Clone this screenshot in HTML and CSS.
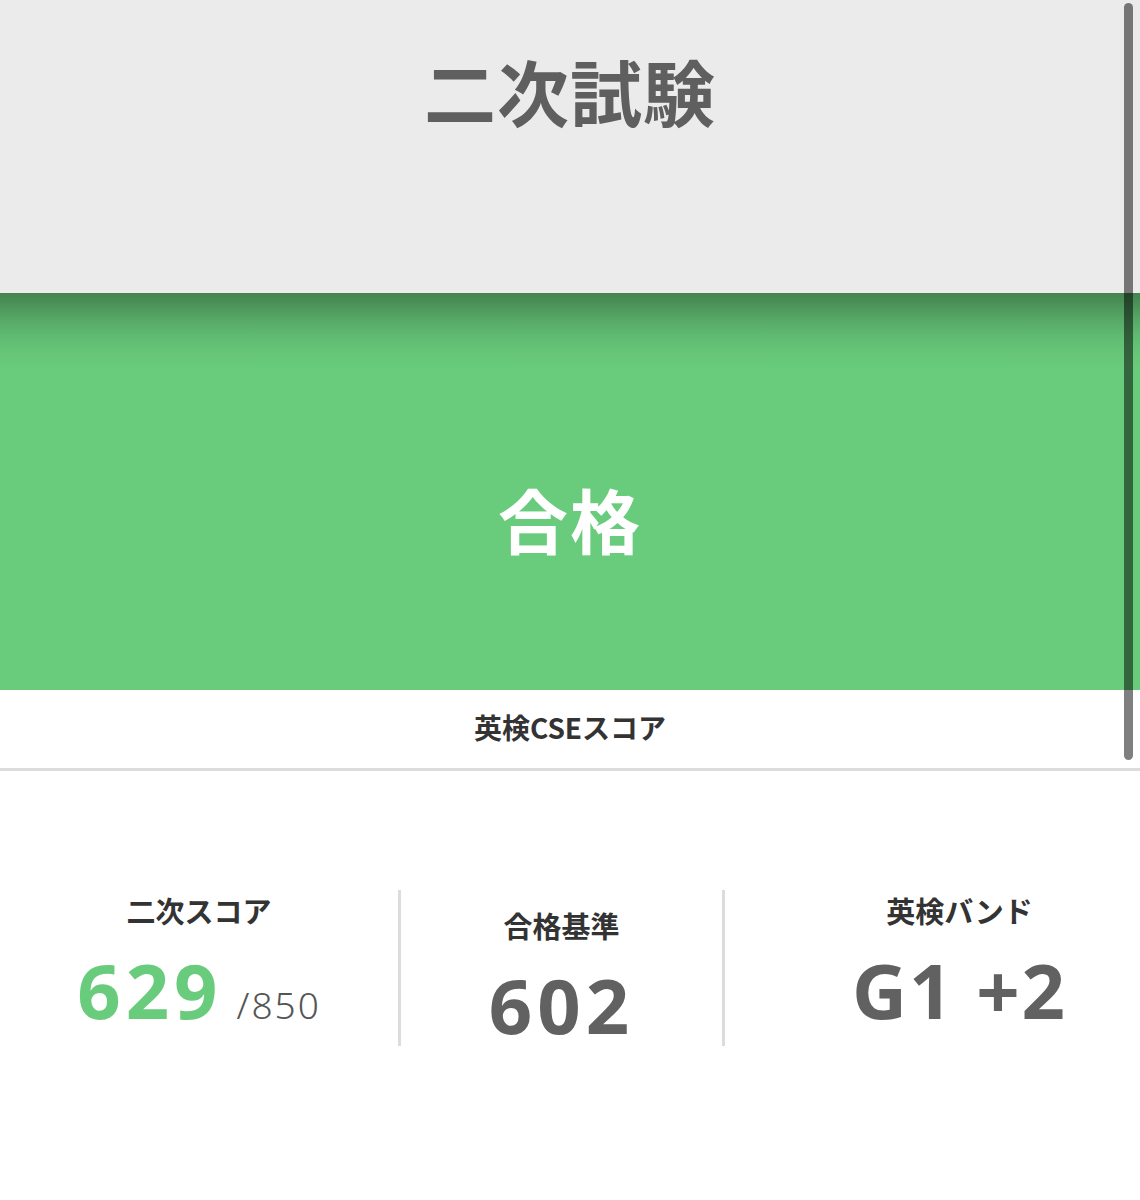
FILE: index.html
```html
<!DOCTYPE html>
<html lang="ja">
<head>
  <meta charset="UTF-8" />
  <meta name="viewport" content="width=device-width, initial-scale=1.0" />
  <title>二次試験</title>
  <link rel="stylesheet" href="styles.css">
</head>
<body>
  <div class="page">
    <header class="header">
      <h1>二次試験</h1>
    </header>

    <section class="result">
      <p class="result-text">合格</p>
    </section>

    <div class="section-title">英検CSEスコア</div>

    <section class="stats">
      <div class="stat">
        <div class="stat-label">二次スコア</div>
        <div class="stat-value">
          <span class="score">629</span>
          <span class="max">/850</span>
        </div>
      </div>
      <div class="stat stat-mid">
        <div class="stat-label">合格基準</div>
        <div class="stat-value">602</div>
      </div>
      <div class="stat stat-band">
        <div class="stat-label">英検バンド</div>
        <div class="stat-value band-value">G1 +2</div>
      </div>
    </section>

    <div class="scrollbar"></div>
  </div>
</body>
</html>
```

FILE: styles.css
```css
:root {
  --gray-bg: #ebebeb;
  --title-color: #5f5f5f;
  --green: #69cc7c;
  --text-dark: #333;
  --num-color: #616161;
  --line-color: #dcdcdc;
}

body {
  margin: 0;
  background: #fff;
  font-family: "Noto Sans CJK JP", "Noto Sans", sans-serif;
}

.page {
  position: relative;
  min-height: 1200px;
}

.header {
  height: 293px;
  background: var(--gray-bg);
  display: flex;
  justify-content: center;
  align-items: flex-start;
}

.header h1 {
  margin: 54px 0 0;
  font-size: 72px;
  line-height: 1;
  font-weight: 700;
  letter-spacing: 1px;
  color: var(--title-color);
}

.result {
  height: 397px;
  box-sizing: border-box;
  padding-top: 55px;
  background:
    linear-gradient(to bottom,
      rgba(0, 0, 0, 0.36) 0,
      rgba(0, 0, 0, 0.28) 12px,
      rgba(0, 0, 0, 0.18) 26px,
      rgba(0, 0, 0, 0.09) 42px,
      rgba(0, 0, 0, 0.03) 60px,
      rgba(0, 0, 0, 0) 80px),
    var(--green);
  display: flex;
  justify-content: center;
  align-items: center;
}

.result-text {
  margin: 0;
  font-size: 70px;
  line-height: 1;
  font-weight: 700;
  color: #fff;
  letter-spacing: 2px;
}

.section-title {
  height: 81px;
  box-sizing: border-box;
  padding-bottom: 5px;
  display: flex;
  justify-content: center;
  align-items: center;
  border-bottom: 3px solid var(--line-color);
  font-size: 28px;
  font-weight: 700;
  color: var(--text-dark);
}

.stats {
  display: grid;
  grid-template-columns: 398px 324px 1fr;
  padding-top: 119px;
}

.stat {
  height: 156px;
  box-sizing: border-box;
  display: flex;
  flex-direction: column;
  align-items: center;
  padding-top: 0;
}

.stat-mid,
.stat-band {
  border-left: 3px solid var(--line-color);
}

.stat-mid {
  padding-top: 15px;
}

.stat-band {
  padding-left: 54px;
}

.stat-label {
  font-size: 29px;
  line-height: 40px;
  font-weight: 700;
  color: var(--text-dark);
}

.stat-value {
  margin-top: 22px;
  font-family: "Noto Sans", sans-serif;
  font-size: 76px;
  line-height: 1;
  font-weight: 700;
  letter-spacing: 5px;
  color: var(--num-color);
  display: flex;
  align-items: baseline;
  gap: 14px;
}

.band-value {
  letter-spacing: 2px;
}

.score {
  color: var(--green);
}

.max {
  font-size: 37px;
  font-weight: 300;
  color: #555;
  letter-spacing: 2px;
}

.scrollbar {
  position: absolute;
  top: 3px;
  right: 7px;
  width: 9px;
  height: 757px;
  border-radius: 5px;
  background: rgba(0, 0, 0, 0.5);
}
```
